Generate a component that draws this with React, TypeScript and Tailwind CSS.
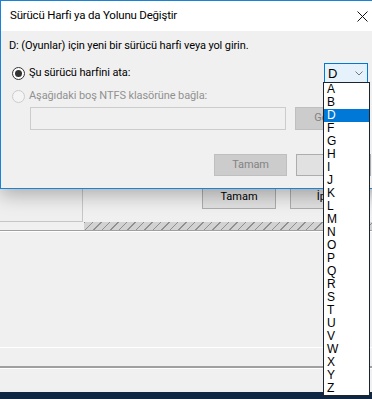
import React from 'react';

const drives = ['A', 'B', 'D', 'F', 'G', 'H', 'I', 'J', 'K', 'L', 'M', 'N', 'O', 'P', 'Q', 'R', 'S', 'T', 'U', 'V', 'W', 'X', 'Y', 'Z'];

const uiFont = { fontFamily: 'Roboto, "Noto Sans", "Liberation Sans", sans-serif' };
const listFont = { fontFamily: '"Liberation Sans", Arial, sans-serif' };

const Radio: React.FC<{ checked?: boolean; disabled?: boolean }> = ({ checked, disabled }) => (
  <span
    className={`flex items-center justify-center w-[13px] h-[13px] rounded-full border shrink-0 ${
      disabled ? 'border-[#cccccc] bg-[#f4f4f4]' : 'border-[#333333] bg-white'
    }`}
  >
    {checked && <span className="w-[7px] h-[7px] rounded-full bg-[#333333]" />}
  </span>
);

// window behind the dialog (mostly hidden)
const ParentWindow: React.FC = () => (
  <div className="flex flex-col h-full bg-[#f0f0f0]">
    <div className="h-[186px] shrink-0" />
    <div className="flex h-[36px] shrink-0">
      <div className="w-[83px] h-full border-r border-b border-[#c6c6c6] bg-[#efefef]" />
      <button className="ml-[119px] w-[74px] h-[23px] border border-[#adadad] bg-[#e1e1e1] text-[11px] text-black">
        Tamam
      </button>
      <button className="ml-[14px] w-[75px] h-[23px] border border-[#adadad] bg-[#e1e1e1] text-[11px] text-black">
        İptal
      </button>
    </div>
    <div className="flex h-[8px] shrink-0">
      <div className="w-[84px]" />
      <div className="flex-1 bg-[repeating-linear-gradient(135deg,#8f8f8f_0_1px,#d2d2d2_1px_6px)]" />
    </div>
    <div className="h-px shrink-0 bg-[#a0a0a0]" />
    <div className="h-px shrink-0 bg-white" />
    <div className="h-[115px] shrink-0" />
    <div className="h-px shrink-0 bg-white" />
    <div className="h-[18px] shrink-0" />
    <div className="h-[2px] shrink-0 bg-[#a0a0a0]" />
    <div className="h-px shrink-0 bg-white" />
    <div className="flex-1" />
    <div className="h-[7px] shrink-0 bg-[#0f2742]" />
  </div>
);

const Dialog: React.FC = () => (
  <div className="absolute left-0 top-0 w-[386px] h-[189px] flex flex-col border border-[#1883d7] bg-[#f0f0f0] shadow-[0_6px_18px_rgba(0,0,0,0.28)]">
    {/* title bar */}
    <div className="flex items-center h-[30px] bg-white shrink-0">
      <span className="pl-[9px] text-[11.5px] tracking-[-0.2px] text-black">Sürücü Harfi ya da Yolunu Değiştir</span>
      <span className="ml-auto w-[46px] h-full flex items-center justify-center">
        <svg width="11" height="11" viewBox="0 0 11 11">
          <path d="M0.5 0.5 L10.5 10.5 M10.5 0.5 L0.5 10.5" stroke="#111" strokeWidth="1" />
        </svg>
      </span>
    </div>

    <div className="flex flex-col pl-[8px] pt-[7px] text-[11px] tracking-[-0.1px] text-black">
      <div className="h-[16px] leading-[16px]">D: (Oyunlar) için yeni bir sürücü harfi veya yol girin.</div>

      <div className="flex items-center h-[20px] mt-[9px]">
        <span className="ml-[3px] flex items-center gap-[4px]">
          <Radio checked />
          <span className="leading-[16px]">Şu sürücü harfini ata:</span>
        </span>
        <div className="ml-auto mr-[17px] flex items-center justify-between w-[44px] h-[20px] border border-[#0078d7] bg-[#e5f1fb] pl-[3px] pr-[4px]">
          <span style={listFont} className="text-[13px] leading-none">D</span>
          <svg width="8" height="5" viewBox="0 0 8 5">
            <path d="M0.5 0.5 L4 4 L7.5 0.5" fill="none" stroke="#777" strokeWidth="1" />
          </svg>
        </div>
      </div>

      <div className="flex items-center h-[16px] mt-[5px]">
        <span className="ml-[3px] flex items-center gap-[4px]">
          <Radio disabled />
          <span className="leading-[16px] text-[#919191]">Aşağıdaki boş NTFS klasörüne bağla:</span>
        </span>
      </div>

      <div className="flex mt-[3px]">
        <div className="ml-[21px] w-[256px] h-[23px] border border-[#cccccc] bg-[#f0f0f0]" />
        <div className="ml-[9px] w-[75px] h-[23px] flex items-center justify-center border border-[#bfbfbf] bg-[#cccccc] text-[#838383]">
          Gözat...
        </div>
      </div>

      <div className="flex mt-[24px]">
        <div className="ml-[205px] w-[73px] h-[22px] flex items-center justify-center border border-[#bfbfbf] bg-[#cccccc] text-[#838383]">
          Tamam
        </div>
        <div className="ml-[9px] w-[75px] h-[22px] flex items-center justify-center border border-[#adadad] bg-[#e1e1e1]">
          İptal
        </div>
      </div>
    </div>
  </div>
);

const DriveList: React.FC = () => (
  <div
    style={listFont}
    className="absolute left-[323px] top-[82px] w-[47px] flex flex-col border border-[#1c2430] bg-white text-[12px] text-black"
  >
    {drives.map((d) => (
      <div
        key={d}
        className={`h-[13px] leading-[13px] pl-[3px] ${d === 'D' ? 'bg-[#0078d7] text-white' : ''}`}
      >
        {d}
      </div>
    ))}
  </div>
);

export default function App() {
  return (
    <div style={uiFont} className="relative w-[372px] h-[399px] overflow-hidden bg-[#f0f0f0]">
      <ParentWindow />
      <Dialog />
      <DriveList />
    </div>
  );
}
